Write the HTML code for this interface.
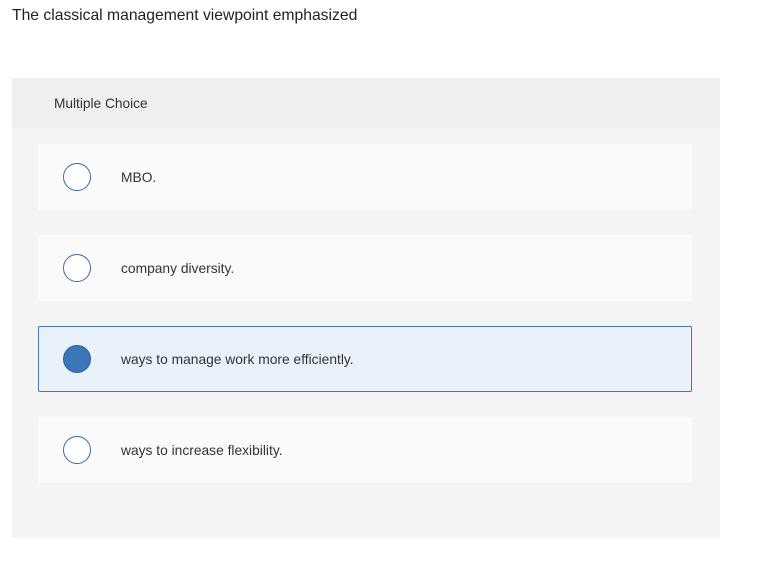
<!DOCTYPE html>
<html><head><style>
body{margin:0;background:#fff;font-family:"Liberation Sans",sans-serif;width:760px;height:584px;position:relative;overflow:hidden}
.q{position:absolute;left:12px;top:7px;font-size:15.7px;color:#222}
.box{position:absolute;left:12px;top:78px;width:708px;height:460px;background:#f4f4f4}
.hd{height:50px;background:#efefef;font-size:13.7px;color:#333;line-height:51px;padding-left:42px}
.op{position:absolute;left:26px;width:654px;height:66px;background:#fafafa;box-sizing:border-box}
.op .c{position:absolute;left:25px;top:19px;width:28px;height:28px;border-radius:50%;border:1.5px solid #3a6a9e;box-sizing:border-box;background:#fff}
.op span{position:absolute;left:83px;top:1px;line-height:66px;font-size:13.8px;color:#333}
.sel{background:#e9f1fb;border:1px solid #4177b3;border-radius:2px}
.sel .c{background:#3b76b9;border-color:#2f5f96;left:24px;top:18px}
.sel span{left:82px;line-height:64px}
</style></head><body>
<div class="q">The classical management viewpoint emphasized</div>
<div class="box">
<div class="hd">Multiple Choice</div>
<div class="op" style="top:66px"><div class="c"></div><span>MBO.</span></div>
<div class="op" style="top:157px"><div class="c"></div><span>company diversity.</span></div>
<div class="op sel" style="top:248px"><div class="c"></div><span>ways to manage work more efficiently.</span></div>
<div class="op" style="top:339px"><div class="c"></div><span>ways to increase flexibility.</span></div>
</div>
</body></html>
